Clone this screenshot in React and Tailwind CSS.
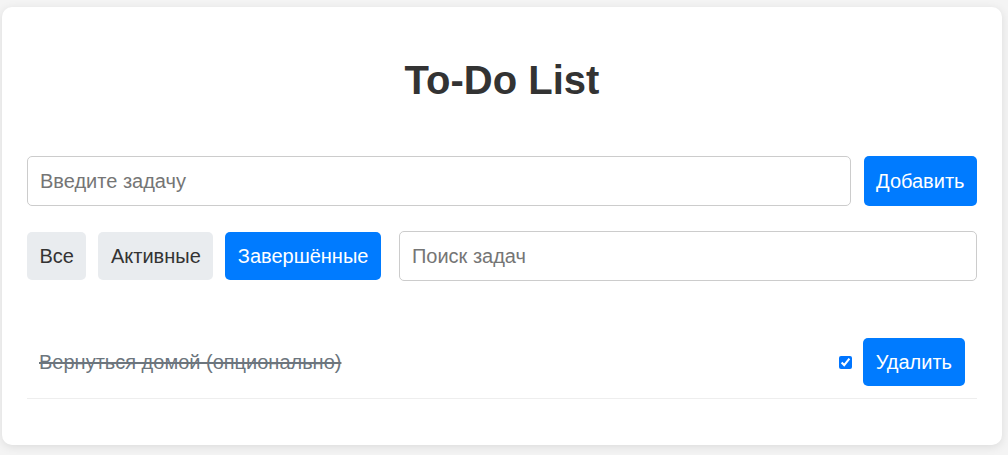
import React from "react";

export default function App() {
  const font = { fontFamily: '"Liberation Sans", Arial, sans-serif' };
  return (
    <div className="min-h-[455px] w-[1008px] bg-[#f4f4f4] pl-[2px] pt-[7px]" style={font}>
      <div className="w-[1000px] h-[438px] rounded-[10px] bg-white shadow-[0_2px_10px_rgba(0,0,0,0.1)] px-[25px] pt-[25px]">
        <h1 className="mt-[25px] mb-[53px] text-center text-[40px] leading-[46px] font-bold text-[#333]">
          To-Do List
        </h1>
        <div className="flex gap-[13px]">
          <input
            type="text"
            placeholder="Введите задачу"
            className="flex-1 min-w-0 h-[50px] rounded-[5px] border border-[#ccc] px-3 text-[20px] leading-6 text-[#333] placeholder:text-[#757575] outline-none"
          />
          <button className="h-[50px] rounded-[5px] bg-[#007bff] px-[12.5px] text-[20px] leading-6 text-white">
            Добавить
          </button>
        </div>
        <div className="mt-[25px] flex items-center gap-3">
          <button className="h-[48px] rounded-[5px] bg-[#e9ecef] px-[12.5px] text-[20px] leading-6 text-[#333]">
            Все
          </button>
          <button className="h-[48px] rounded-[5px] bg-[#e9ecef] px-[12.5px] text-[20px] leading-6 text-[#333]">
            Активные
          </button>
          <button className="h-[48px] rounded-[5px] bg-[#007bff] px-[12.5px] text-[20px] leading-6 text-white">
            Завершённые
          </button>
          <input
            type="text"
            placeholder="Поиск задач"
            className="ml-[6px] flex-1 min-w-0 h-[50px] rounded-[5px] border border-[#ccc] px-3 text-[20px] leading-6 text-[#333] placeholder:text-[#757575] outline-none"
          />
        </div>
        <ul className="mt-[45px]">
          <li className="flex items-center justify-between border-b border-[#eee] px-3 py-3">
            <span className="text-[20px] leading-6 text-[#6c757d] line-through">
              Вернуться домой (опционально)
            </span>
            <div className="flex items-center gap-2">
              <input type="checkbox" defaultChecked className="m-0 mr-[3px] h-[13px] w-[13px]" />
              <button className="h-[48px] rounded-[5px] bg-[#007bff] px-[13px] text-[20px] leading-6 text-white">
                Удалить
              </button>
            </div>
          </li>
        </ul>
      </div>
    </div>
  );
}
